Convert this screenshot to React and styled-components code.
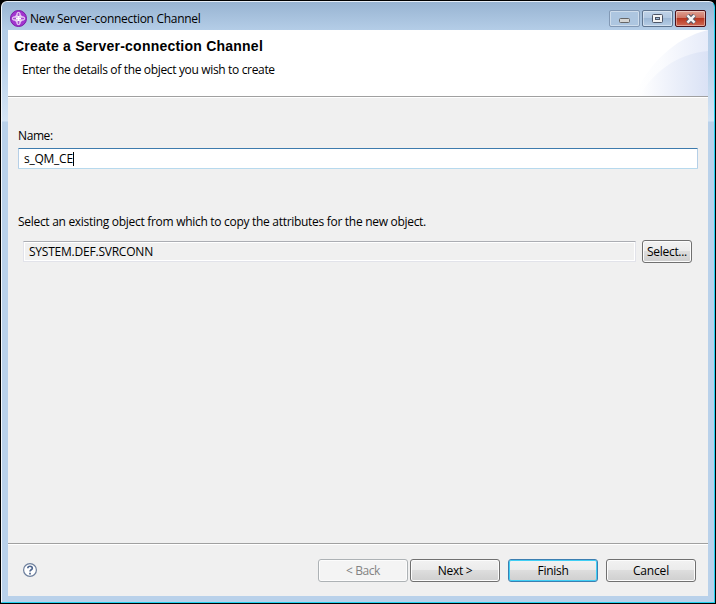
import React from "react";
import styled, { createGlobalStyle } from "styled-components";

const Global = createGlobalStyle`
  *{box-sizing:border-box}
  html,body{margin:0;background:#000;overflow:hidden}
  button{font:inherit;margin:0;outline:0}
`;
const Backdrop = styled.div`
  width:716px;height:604px;padding:1px;background:#000;
  font:12px "Open Sans","Noto Sans",sans-serif;color:#000;
`;
const Win = styled.div`
  width:714px;height:602px;border:1px solid #22d0ee;border-top-color:#e6eef7;border-left-color:#f4f8fc;
  border-radius:6px 6px 1px 1px;padding:0 6px 6px;display:flex;flex-direction:column;
  background:linear-gradient(#98b4d2 0,#b4cde7 28px,#b9d1ea 60px,#d5e5f5 119px,#b9d1ea 120px);
`;
const TitleBar = styled.div`height:28px;display:flex;align-items:center;padding-left:2px;`;
const Text = styled.span`
  white-space:pre;line-height:16px;letter-spacing:${p => p.$ls ?? -0.3}px;
`;
const Title = styled(Text)`margin-left:3px;flex:1;padding-top:6px;`;
const Logo = styled.svg`width:17px;height:17px;margin-top:4px;display:block;`;
const Controls = styled.div`display:flex;gap:2px;align-self:flex-start;margin-top:8px;padding-right:2px;`;
const Control = styled.button`
  width:31px;height:17px;padding:0;border-radius:2px;display:grid;place-items:center;
  border:1px solid ${p => p.$danger ? "#4b1018" : p.$dim ? "#8299b5" : "#5f7590"};
  background:${p => p.$danger ? "linear-gradient(#dfa193,#cf7463 45%,#b93721 50%,#cf6a55)" : p.$dim ? "#adc6e0" : "linear-gradient(#c0d3e8,#b2c9e2 45%,#9db8d6 50%,#b6cde5)"};
  box-shadow:inset 0 0 0 1px rgba(255,255,255,.4);
  svg{display:block;margin-top:${p => p.$dim ? 4 : 0}px}
`;
const Client = styled.main`flex:1;background:#f0f0f0;display:flex;flex-direction:column;min-height:0;`;
const Banner = styled.header`
  height:67px;background:#fff;border-bottom:1px solid #a0a0a0;display:flex;justify-content:space-between;
`;
const BannerText = styled.div`padding:8px 0 0 6px;display:flex;flex-direction:column;`;
const Heading = styled.h1`
  margin:0;font:bold 14px/16px "Liberation Sans",sans-serif;letter-spacing:.23px;white-space:pre;
`;
const Subtitle = styled(Text)`margin:8px 0 0 8px;`;
const Art = styled.svg`display:block;`;
const Form = styled.section`
  flex:1;border-top:1px solid #fff;padding:30px 10px 0;display:flex;flex-direction:column;
`;
const NameField = styled.div`
  width:680px;height:21px;margin:4px 0 45px;padding-left:5px;background:#fff;display:flex;align-items:center;
  border:1px solid #b5cfe7;border-top-color:#3d7bad;border-bottom-color:#b7d9ed;border-radius:1px;
`;
const Caret = styled.span`width:1px;height:14px;background:#000;`;
const CopyRow = styled.div`display:flex;gap:6px;margin:10px 0 0 5px;align-items:center;`;
const ReadOnly = styled.div`
  width:613px;height:21px;border:1px solid #e2e3ea;border-top-color:#abadb3;padding-left:5px;
  box-shadow:inset 0 0 0 1px #fff;display:flex;align-items:center;
`;
const Button = styled.button`
  width:${p => p.$w || 90}px;height:23px;padding:1px 0 0;border-radius:3px;display:grid;place-items:center;color:inherit;
  border:1px solid #707070;background:linear-gradient(#f2f2f2,#ebebeb 48%,#dddddd 50%,#cfcfcf);
  box-shadow:inset 0 0 0 1px #fcfcfc;
  ${p => p.$primary && "border-color:#3c7fb1;box-shadow:inset 0 0 0 1px #40cff5;"}
  &:disabled{border-color:#adb2b5;background:#f4f4f4;color:#838383;}
`;
const Footer = styled.footer`
  height:53px;border-top:1px solid #a0a0a0;box-shadow:inset 0 1px #fff;
  display:flex;align-items:center;padding:0 12px 0 15px;
`;
const Help = styled.svg`width:14px;height:14px;margin-right:auto;`;
const Nav = styled.div`display:flex;gap:2px;margin-right:8px;`;
const Done = styled.div`display:flex;gap:8px;`;

export default function App() {
  return (
    <Backdrop><Global /><Win>
      <TitleBar>
        <Logo viewBox="0 0 17 17">
          <circle cx="8.5" cy="8.5" r="8" fill="#a236cf" stroke="#7a1aa6" />
          <rect x="5" y="5" width="7" height="7" rx="2.5" fill="none" stroke="#dcb2f0" />
          <rect x="7" y="2.5" width="3" height="12" rx="1.3" fill="#a84fd0" stroke="#fff" />
          <rect x="2.5" y="7" width="12" height="3" rx="1.3" fill="#a84fd0" stroke="#fff" />
          <path d="M8.5 6v5M6 8.5h5" stroke="#fff" strokeWidth="1.4" />
        </Logo>
        <Title>New Server-connection Channel</Title>
        <Controls>
          <Control $dim aria-label="Minimize"><svg width="11" height="5"><rect x=".5" y=".5" width="10" height="4" rx="1" fill="#d6d6d4" stroke="#666" /></svg></Control>
          <Control aria-label="Maximize"><svg width="11" height="9"><rect x=".5" y=".5" width="10" height="8" rx="1" fill="#f4f4f4" stroke="#4d5566" /><rect x="3.5" y="3.5" width="4" height="2" fill="#9db8d6" stroke="#4d5566" /></svg></Control>
          <Control $danger aria-label="Close"><svg width="12" height="10" viewBox="0 0 12 10"><path d="M2.4 1.2l7.2 7.6M9.6 1.2l-7.2 7.6" stroke="#535666" strokeWidth="4.4" /><path d="M2.4 1.4l7.2 7.2M9.6 1.4l-7.2 7.2" stroke="#f5f5f5" strokeWidth="2.6" /></svg></Control>
        </Controls>
      </TitleBar>
      <Client>
        <Banner>
          <BannerText>
            <Heading>Create a Server-connection Channel</Heading>
            <Subtitle $ls={-0.34}>Enter the details of the object you wish to create</Subtitle>
          </BannerText>
          <Art width="74" height="66" viewBox="0 0 74 66">
            <defs>
              <linearGradient id="outerArc"><stop offset="0" stopColor="#fff" /><stop offset=".35" stopColor="#fbfcfe" /><stop offset="1" stopColor="#e6ebf9" /></linearGradient>
              <linearGradient id="innerArc"><stop offset="0" stopColor="#fff" /><stop offset=".4" stopColor="#f0f3fb" /><stop offset="1" stopColor="#dae2f5" /></linearGradient>
            </defs>
            <path d="M0 66C14 35 40 8 74 0V66Z" fill="url(#outerArc)" />
            <path d="M5 66C20 42 42 24 74 21V66Z" fill="url(#innerArc)" />
          </Art>
        </Banner>
        <Form>
          <Text $ls={-0.4}>Name:</Text>
          <NameField><Text $ls={-0.25}>s_QM_CE</Text><Caret /></NameField>
          <Text $ls={-0.295}>Select an existing object from which to copy the attributes for the new object.</Text>
          <CopyRow>
            <ReadOnly><Text $ls={-0.22}>SYSTEM.DEF.SVRCONN</Text></ReadOnly>
            <Button $w={50}><Text>Select...</Text></Button>
          </CopyRow>
        </Form>
        <Footer>
          <Help viewBox="0 0 14 14"><circle cx="7" cy="7" r="6.4" fill="#fff" stroke="#6d7f9c" strokeWidth="1.2" /><path d="M4.8 5.3C4.8 2.6 9.3 2.6 9.3 5.2C9.3 6.8 7 6.8 7 8.6M7 9.8v1.7" fill="none" stroke="#4f6790" strokeWidth="1.7" /></Help>
          <Nav><Button disabled><Text $ls={-0.4}>&lt; Back</Text></Button><Button><Text>Next &gt;</Text></Button></Nav>
          <Done><Button $primary><Text>Finish</Text></Button><Button><Text $ls={-0.15}>Cancel</Text></Button></Done>
        </Footer>
      </Client>
    </Win></Backdrop>
  );
}
